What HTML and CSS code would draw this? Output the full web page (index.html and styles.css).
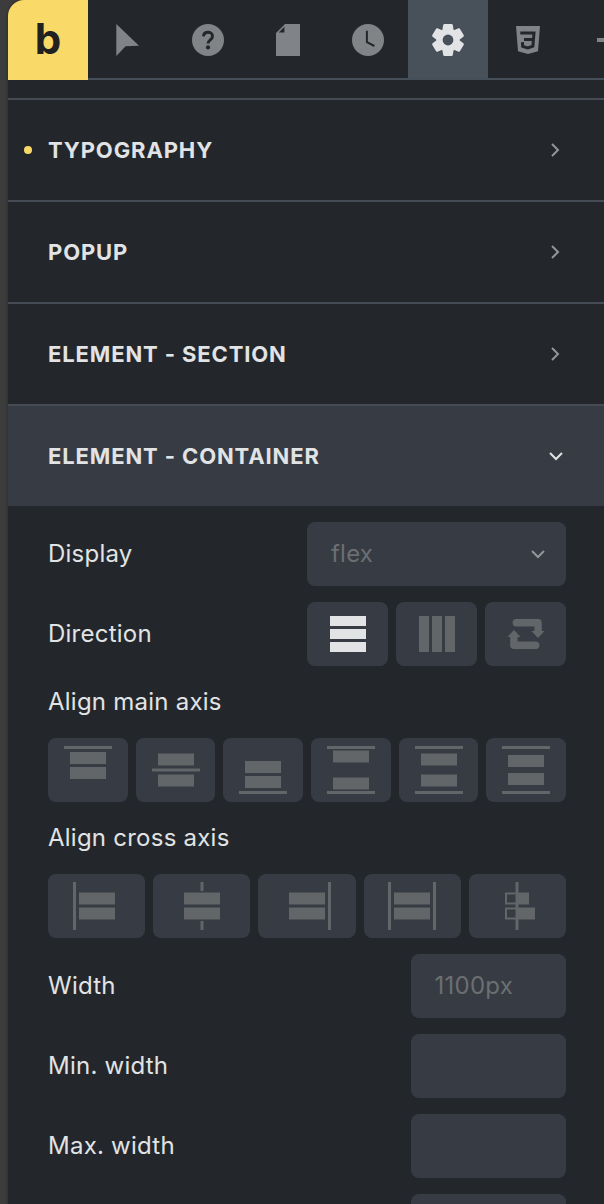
FILE: index.html
```html
<!DOCTYPE html>
<html lang="en">

<head>
    <meta charset="UTF-8">
    <meta name="viewport" content="width=device-width, initial-scale=1.0">
    <title>Theme Styles</title>
    <link rel="stylesheet" href="styles.css">
</head>

<body>
    <div class="panel">
        <nav class="toolbar">
            <a href="#" class="logo">b</a>
            <button type="button" class="tab" aria-label="Select">
                <svg width="32" height="32" viewBox="0 0 32 32"><path d="M4.3 0V32L13.6 22.3 27 21.7z"/></svg>
            </button>
            <button type="button" class="tab" aria-label="Help">
                <svg width="32" height="32" viewBox="0 0 32 32">
                    <circle cx="16" cy="16" r="16"/>
                    <path class="cut" d="M11.5 12.4C11.7 9.8 13.6 8.3 16 8.3s4.5 1.5 4.5 3.9c0 3.6-4.4 3.8-4.4 7.3"/>
                    <circle class="hole" cx="16" cy="23.4" r="2.1"/>
                </svg>
            </button>
            <button type="button" class="tab" aria-label="Pages">
                <svg width="32" height="32" viewBox="0 0 32 32"><path fill-rule="evenodd" d="M4 9L13 0H28V32H4zM12.4 2.7L6.7 8.4H12.4z"/></svg>
            </button>
            <button type="button" class="tab" aria-label="History">
                <svg width="32" height="32" viewBox="0 0 32 32">
                    <circle cx="16" cy="16" r="16"/>
                    <path class="cut thin" d="M14.9 6.7V18.2L22.4 22"/>
                </svg>
            </button>
            <button type="button" class="tab active" aria-label="Settings">
                <svg width="32" height="32" viewBox="0 0 32 32">
                    <defs>
                        <path id="teeth" d="M12.4 0H19.6Q20.6 0 20.8 1L21.6 6V26L20.8 31Q20.6 32 19.6 32H12.4Q11.4 32 11.2 31L10.4 26V6L11.2 1Q11.4 0 12.4 0z"/>
                    </defs>
                    <circle cx="16" cy="16" r="11.5"/>
                    <use href="#teeth"/>
                    <use href="#teeth" transform="rotate(60 16 16)"/>
                    <use href="#teeth" transform="rotate(120 16 16)"/>
                    <circle class="hole" cx="16" cy="16" r="5.4"/>
                </svg>
            </button>
            <button type="button" class="tab" aria-label="CSS">
                <svg width="32" height="32" viewBox="0 0 32 32">
                    <path d="M4 2H28L26 27.3 16 30 6 27.3z"/>
                    <path class="cut" d="M8.3 8.9H22L20.9 22.2 15.8 24 10.7 22.4 10.4 18.2M12 15.6H21.3"/>
                </svg>
            </button>
            <button type="button" class="tab" aria-label="Add">
                <svg width="32" height="32" viewBox="0 0 32 32"><path d="M5 14H14V5H18V14H27V18H18V27H14V18H5z"/></svg>
            </button>
        </nav>

        <main class="groups">
            <button type="button" class="group-title modified">
                <span>Typography</span>
                <svg class="chevron" width="24" height="24" viewBox="0 0 24 24"><path d="M8 6L14 12 8 18"/></svg>
            </button>
            <button type="button" class="group-title">
                <span>Popup</span>
                <svg class="chevron" width="24" height="24" viewBox="0 0 24 24"><path d="M8 6L14 12 8 18"/></svg>
            </button>
            <button type="button" class="group-title">
                <span>Element - Section</span>
                <svg class="chevron" width="24" height="24" viewBox="0 0 24 24"><path d="M8 6L14 12 8 18"/></svg>
            </button>
            <button type="button" class="group-title open" aria-expanded="true">
                <span>Element - Container</span>
                <svg class="chevron" width="24" height="24" viewBox="0 0 24 24"><path d="M6 9L12 15 18 9"/></svg>
            </button>

            <div class="controls">
                <div class="control">
                    <label for="display">Display</label>
                    <div class="select half">
                        <select id="display">
                            <option>flex</option>
                        </select>
                        <svg class="chevron" width="24" height="24" viewBox="0 0 24 24"><path d="M6 9L12 15 18 9"/></svg>
                    </div>
                </div>

                <div class="control">
                    <span class="label" id="direction">Direction</span>
                    <div class="buttons half" role="group" aria-labelledby="direction">
                        <button type="button" class="active" aria-label="Column">
                            <svg width="36" height="36" viewBox="0 0 36 36"><path d="M0 0H36V10H0zM0 13H36V23H0zM0 26H36V36H0z"/></svg>
                        </button>
                        <button type="button" aria-label="Row">
                            <svg width="36" height="36" viewBox="0 0 36 36"><path d="M0 0H10V36H0zM13 0H23V36H13zM26 0H36V36H26z"/></svg>
                        </button>
                        <button type="button" aria-label="Reverse">
                            <svg width="38" height="32" viewBox="0 0 38 32">
                                <defs>
                                    <path id="arrow" d="M9.4 1H31Q34.8 1 34.8 4.8V13H37.6L31 20 24.4 13H27.4V8.6H9.4A3.8 3.8 0 0 1 9.4 1z"/>
                                </defs>
                                <use href="#arrow"/>
                                <use href="#arrow" transform="rotate(180 19 16)"/>
                            </svg>
                        </button>
                    </div>
                </div>

                <div class="control stacked">
                    <span class="label" id="main-axis">Align main axis</span>
                    <div class="buttons" role="group" aria-labelledby="main-axis">
                        <button type="button" aria-label="Start">
                            <svg width="48" height="48" viewBox="0 0 48 48"><path d="M0 0H48V3H0zM6 6H42V18H6zM6 21H42V33H6z"/></svg>
                        </button>
                        <button type="button" aria-label="Center">
                            <svg width="48" height="48" viewBox="0 0 48 48"><path d="M6 7.5H42V19.5H6zM0 22.5H48V25.5H0zM6 28.5H42V40.5H6z"/></svg>
                        </button>
                        <button type="button" aria-label="End">
                            <svg width="48" height="48" viewBox="0 0 48 48"><path d="M6 15H42V27H6zM6 30H42V42H6zM0 45H48V48H0z"/></svg>
                        </button>
                        <button type="button" aria-label="Space between">
                            <svg width="48" height="48" viewBox="0 0 48 48"><path d="M0 0H48V3H0zM6 4.5H42V16.5H6zM6 31.5H42V43.5H6zM0 45H48V48H0z"/></svg>
                        </button>
                        <button type="button" aria-label="Space around">
                            <svg width="48" height="48" viewBox="0 0 48 48"><path d="M0 0H48V3H0zM6 7.5H42V19.5H6zM6 28.5H42V40.5H6zM0 45H48V48H0z"/></svg>
                        </button>
                        <button type="button" aria-label="Space evenly">
                            <svg width="48" height="48" viewBox="0 0 48 48"><path d="M0 0H48V3H0zM6 9H42V21H6zM6 27H42V39H6zM0 45H48V48H0z"/></svg>
                        </button>
                    </div>
                </div>

                <div class="control stacked">
                    <span class="label" id="cross-axis">Align cross axis</span>
                    <div class="buttons" role="group" aria-labelledby="cross-axis">
                        <button type="button" aria-label="Start">
                            <svg width="48" height="48" viewBox="0 0 48 48"><path d="M0 0H3V48H0zM6 10.5H42V22.5H6zM6 25.5H42V37.5H6z"/></svg>
                        </button>
                        <button type="button" aria-label="Center">
                            <svg width="48" height="48" viewBox="0 0 48 48"><path d="M22.5 0H25.5V9H22.5zM6 10.5H42V22.5H6zM6 25.5H42V37.5H6zM22.5 39H25.5V48H22.5z"/></svg>
                        </button>
                        <button type="button" aria-label="End">
                            <svg width="48" height="48" viewBox="0 0 48 48"><path d="M6 10.5H42V22.5H6zM6 25.5H42V37.5H6zM45 0H48V48H45z"/></svg>
                        </button>
                        <button type="button" aria-label="Stretch">
                            <svg width="48" height="48" viewBox="0 0 48 48"><path d="M0 0H3V48H0zM6 10.5H42V22.5H6zM6 25.5H42V37.5H6zM45 0H48V48H45z"/></svg>
                        </button>
                        <button type="button" aria-label="Baseline">
                            <svg width="48" height="48" viewBox="0 0 48 48"><path fill-rule="evenodd" d="M22.5 0H25.5V10.5H36V22.5H25.5V25.5H42V37.5H25.5V48H22.5V37.5H12V25.5H22.5V22.5H12V10.5H22.5zM14 12.5V20.5H22.5V12.5zM14 27.5V35.5H22.5V27.5z"/></svg>
                        </button>
                    </div>
                </div>

                <div class="control">
                    <label for="width">Width</label>
                    <input type="text" id="width" placeholder="1100px">
                </div>
                <div class="control">
                    <label for="min-width">Min. width</label>
                    <input type="text" id="min-width">
                </div>
                <div class="control">
                    <label for="max-width">Max. width</label>
                    <input type="text" id="max-width">
                </div>
                <div class="control last">
                    <input type="text" aria-label="Height">
                </div>
            </div>
        </main>
    </div>
</body>

</html>
```
FILE: styles.css
```css
* {
    box-sizing: border-box;
}

body {
    margin: 0;
    padding-left: 8px;
    height: 100vh;
    overflow: hidden;
    background-color: #3c3c3c;
    color: #e1e3e5;
    font-family: Inter, "Liberation Sans", sans-serif;
    font-size: 24px;
    letter-spacing: 0.01em;
}

button,
input,
select {
    margin: 0;
    border: none;
    color: inherit;
    font: inherit;
    letter-spacing: inherit;
}

svg {
    display: block;
    flex-shrink: 0;
    fill: currentColor;
}

.panel {
    min-height: 100%;
    overflow: hidden;
    background-color: #23272b;
    border-top-left-radius: 16px;
    box-shadow: 0 0 3px rgba(0, 0, 0, 0.4);
}

/* Toolbar */
.toolbar {
    display: flex;
    height: 80px;
    margin-bottom: 18px;
    overflow: hidden;
}

.logo,
.tab {
    display: flex;
    flex: 0 0 80px;
    align-items: center;
    justify-content: center;
}

.logo {
    padding-bottom: 4px;
    background-color: #f9d967;
    color: #212121;
    font-size: 42px;
    font-weight: 700;
    text-decoration: none;
}

.tab {
    padding: 2px 0 0;
    border-bottom: 2px solid #454f59;
    background-color: #23272b;
    color: #818486;
}

.tab.active {
    background-color: #485059;
    color: #e1e3e5;
}

.cut {
    fill: none;
    stroke: #23272b;
    stroke-width: 3;
}

.cut.thin {
    stroke-width: 2;
}

.hole {
    fill: #23272b;
}

.active .hole {
    fill: #485059;
}

/* Groups */
.group-title {
    position: relative;
    display: flex;
    align-items: center;
    justify-content: space-between;
    width: 100%;
    height: 102px;
    padding: 0 36px 0 40px;
    border-top: 2px solid #454c56;
    background-color: #23272b;
    font-size: 22px;
    font-weight: 700;
    letter-spacing: 0.04em;
    text-transform: uppercase;
}

.group-title.open {
    background-color: #373b43;
}

.group-title.modified::before {
    content: "";
    position: absolute;
    top: 46px;
    left: 16px;
    width: 8px;
    height: 8px;
    border-radius: 50%;
    background-color: #f9d967;
}

.chevron {
    fill: none;
    stroke: #92959a;
    stroke-width: 2;
}

.open .chevron {
    stroke: #e1e3e5;
}

/* Controls */
.controls {
    display: flex;
    flex-direction: column;
    gap: 16px;
    padding: 16px 38px 16px 40px;
}

.control {
    display: flex;
    align-items: center;
    justify-content: space-between;
}

.control.stacked {
    flex-direction: column;
    align-items: stretch;
    gap: 16px;
}

.control.last {
    justify-content: flex-end;
}

.label,
label {
    line-height: 40px;
}

.half {
    width: 50%;
}

.select {
    position: relative;
}

.select .chevron {
    position: absolute;
    top: 20px;
    right: 16px;
    pointer-events: none;
}

select,
input {
    height: 64px;
    padding: 0 24px 2px;
    border-radius: 8px;
    background-color: #373b43;
}

select {
    width: 100%;
    appearance: none;
    color: #6b6f72;
}

input {
    width: 30%;
}

input::placeholder {
    color: #6b6f72;
}

.buttons {
    display: flex;
    gap: 8px;
}

.buttons button {
    display: flex;
    flex: 1 1 0;
    align-items: center;
    justify-content: center;
    height: 64px;
    padding: 0;
    border-radius: 8px;
    background-color: #373b43;
    color: #626669;
}

.buttons button.active {
    color: #e1e3e5;
}
```
